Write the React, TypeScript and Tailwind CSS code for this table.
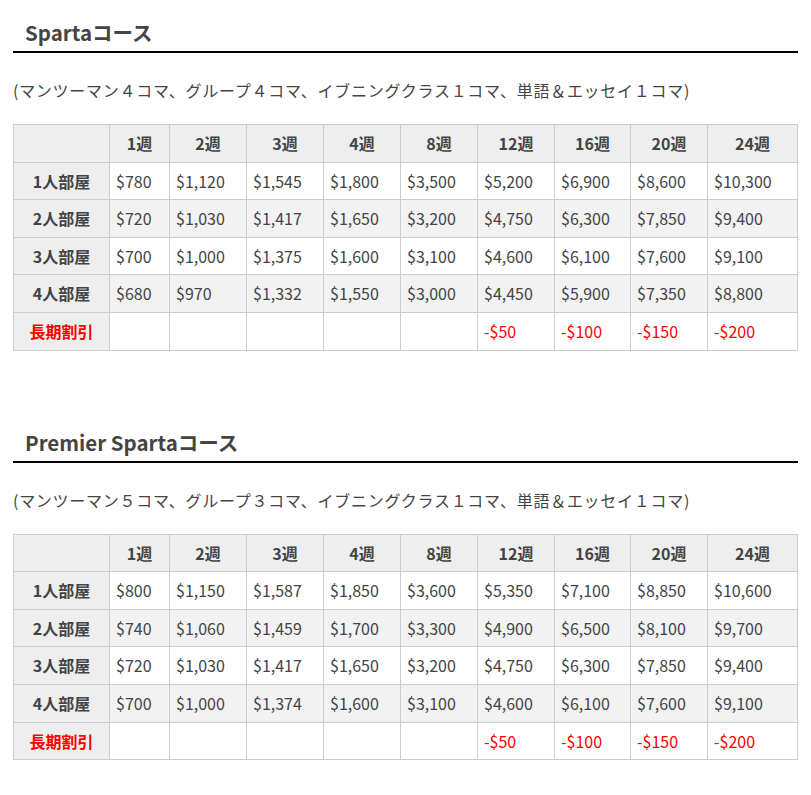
import React from "react";

const weeks = ["1週", "2週", "3週", "4週", "8週", "12週", "16週", "20週", "24週"];
const colWidths = ["w-[96px]", "w-[60px]", "w-[77px]", "w-[77px]", "w-[77px]", "w-[77px]", "w-[77px]", "w-[76px]", "w-[77px]", "w-[90px]"];
const discounts = ["", "", "", "", "", "-$50", "-$100", "-$150", "-$200"];

const courses = [
  {
    title: "Spartaコース",
    note: "(マンツーマン４コマ、グループ４コマ、イブニングクラス１コマ、単語＆エッセイ１コマ)",
    rows: [
      ["1人部屋", "$780", "$1,120", "$1,545", "$1,800", "$3,500", "$5,200", "$6,900", "$8,600", "$10,300"],
      ["2人部屋", "$720", "$1,030", "$1,417", "$1,650", "$3,200", "$4,750", "$6,300", "$7,850", "$9,400"],
      ["3人部屋", "$700", "$1,000", "$1,375", "$1,600", "$3,100", "$4,600", "$6,100", "$7,600", "$9,100"],
      ["4人部屋", "$680", "$970", "$1,332", "$1,550", "$3,000", "$4,450", "$5,900", "$7,350", "$8,800"],
    ],
  },
  {
    title: "Premier Spartaコース",
    note: "(マンツーマン５コマ、グループ３コマ、イブニングクラス１コマ、単語＆エッセイ１コマ)",
    rows: [
      ["1人部屋", "$800", "$1,150", "$1,587", "$1,850", "$3,600", "$5,350", "$7,100", "$8,850", "$10,600"],
      ["2人部屋", "$740", "$1,060", "$1,459", "$1,700", "$3,300", "$4,900", "$6,500", "$8,100", "$9,700"],
      ["3人部屋", "$720", "$1,030", "$1,417", "$1,650", "$3,200", "$4,750", "$6,300", "$7,850", "$9,400"],
      ["4人部屋", "$700", "$1,000", "$1,374", "$1,600", "$3,100", "$4,600", "$6,100", "$7,600", "$9,100"],
    ],
  },
];

function PriceTable({ rows }: { rows: string[][] }) {
  return (
    <table className="w-full table-fixed border-collapse border border-[#cccccc] text-[16px] leading-[24.6px]">
      <colgroup>
        {colWidths.map((w, i) => (
          <col key={i} className={w} />
        ))}
      </colgroup>
      <thead>
        <tr className="bg-[#eeeeee]">
          <th className="border border-[#cccccc] py-[6px]" />
          {weeks.map((w) => (
            <th key={w} className="border border-[#cccccc] py-[6px] text-center font-bold">
              {w}
            </th>
          ))}
        </tr>
      </thead>
      <tbody>
        {rows.map((row, ri) => (
          <tr key={ri} className={ri % 2 === 1 ? "bg-[#f2f2f2]" : "bg-white"}>
            <th className="border border-[#cccccc] bg-[#eeeeee] py-[6px] text-center font-bold">{row[0]}</th>
            {row.slice(1).map((v, ci) => (
              <td key={ci} className="border border-[#cccccc] px-[6px] py-[6px] whitespace-nowrap">
                {v}
              </td>
            ))}
          </tr>
        ))}
        <tr className="bg-white">
          <th className="border border-[#cccccc] bg-[#eeeeee] py-[6px] text-center font-bold text-[#ff0000]">長期割引</th>
          {discounts.map((d, i) => (
            <td key={i} className="border border-[#cccccc] px-[6px] py-[6px] text-[#ff0000]">
              {d}
            </td>
          ))}
        </tr>
      </tbody>
    </table>
  );
}

export default function App() {
  return (
    <div
      className="min-h-[795px] bg-white px-[13px] text-[#444444]"
      style={{ fontFamily: '"Noto Sans CJK JP", "Noto Sans", sans-serif' }}
    >
      {courses.map((c, i) => (
        <section key={c.title} className={i === 0 ? "pt-[16px]" : "mt-[59px] pt-[16px]"}>
          <h2 className="border-b-2 border-black pb-[3px] pl-[12px] text-[20.5px] font-bold leading-[32px]">
            {c.title}
          </h2>
          <p className="mt-[25px] text-[16px] leading-[24px] tracking-[0.72px]">{c.note}</p>
          <div className="mt-[22px]">
            <PriceTable rows={c.rows} />
          </div>
        </section>
      ))}
    </div>
  );
}
